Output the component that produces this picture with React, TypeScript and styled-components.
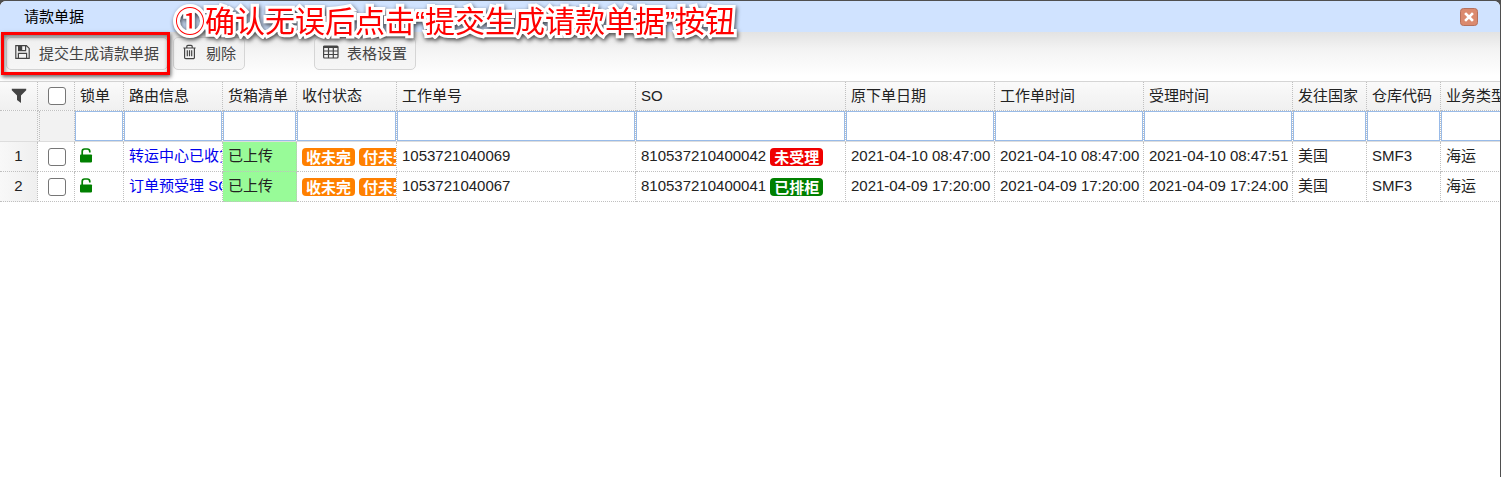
import React from "react";
import styled, { createGlobalStyle } from "styled-components";

const GlobalStyle = createGlobalStyle`
  * { box-sizing: border-box; }
  html, body, #root { height: 100%; }
  body {
    margin: 0;
    background: #4f4f4f;
    color: #222;
    font: 15px/20px "Liberation Sans", "Noto Sans CJK SC", sans-serif;
  }
`;

const Page = styled.div`
  height: 100%;
  padding-top: 1px;
`;

const Dialog = styled.main`
  position: relative;
  display: flex;
  flex-direction: column;
  min-height: 100%;
  margin: 0 1px 0 0;
  border-radius: 6px 6px 0 0;
  background: #fff;
  overflow: hidden;
`;

const TitleBar = styled.header`
  display: flex;
  align-items: center;
  justify-content: space-between;
  height: 31px;
  padding: 0 22px 0 24px;
  background: #d0e3ff;
`;

const Title = styled.h1`
  margin: 0;
  font-size: 15px;
  font-weight: 400;
  line-height: 20px;
  color: #000;
`;

const CloseButton = styled.button`
  display: flex;
  width: 18px;
  height: 18px;
  padding: 0;
  border: 0;
  background: none;
`;

const Toolbar = styled.div`
  display: flex;
  align-items: flex-start;
  height: 49px;
  padding: 5px 6px;
  background: linear-gradient(#e3e3e3, #f3f3f3 35%, #fff 90%);
`;

const ToolButton = styled.button<{ $gap?: number }>`
  display: flex;
  align-items: center;
  gap: 8px;
  height: 33px;
  margin: 0 0 0 ${(p) => p.$gap ?? 0}px;
  padding: 0 8px;
  border: 1px solid #d5d5d5;
  border-radius: 5px;
  background: linear-gradient(#f0f0f0, #f6f6f6);
  color: #444;
  font: inherit;
  white-space: nowrap;

  svg {
    margin-bottom: 3px;
  }
`;

const GridWrap = styled.section`
  overflow: hidden;
  border-top: 1px solid #d5d5d5;
`;

const Grid = styled.table`
  width: 1515px;
  table-layout: fixed;
  border-collapse: separate;
  border-spacing: 0;
`;

const HeadCell = styled.th`
  height: 29px;
  padding: 0 0 0 5px;
  border-right: 1px dotted #c0c0c0;
  border-bottom: 1px dotted #c0c0c0;
  background: linear-gradient(#fafafa, #f0f0f0);
  color: #222;
  font-weight: 400;
  text-align: left;
  white-space: nowrap;
`;

const HeadTool = styled(HeadCell)`
  padding: 0;
`;

const FilterCell = styled.td<{ $blank?: boolean }>`
  height: 31px;
  padding: 0;
  border-right: 1px dotted #c0c0c0;
  border-bottom: 1px solid #ddd;
  background: ${(p) => (p.$blank ? "#f2f2f2" : "#fff")};
`;

const FilterSpacer = styled.div`
  height: 30px;
  margin-left: 1px;
  border-left: 1px dotted #c0c0c0;
`;

const FilterInput = styled.input`
  display: block;
  width: 100%;
  height: 30px;
  margin: 0;
  padding: 0 4px;
  border: 1px solid #99bbe8;
  background: #fff;
  font: inherit;
  outline: 0;
`;

const Cell = styled.td<{ $done?: boolean }>`
  height: 30px;
  padding: 0 0 2px 5px;
  border-right: 1px dotted #c0c0c0;
  border-bottom: 1px dotted #c0c0c0;
  background: ${(p) => (p.$done ? "#98fb98" : "#fff")};
  overflow: hidden;
  white-space: nowrap;
`;

const NumberCell = styled(Cell)`
  padding: 0 0 2px;
  background: linear-gradient(90deg, #f8f8f8, #efefef);
  text-align: center;
`;

const CheckCell = styled(Cell)`
  padding: 0;
`;

const Center = styled.div`
  display: flex;
  align-items: center;
  justify-content: center;
`;

const CheckBox = styled(Center)`
  padding-left: 2px;
`;

const Check = styled.input`
  appearance: none;
  width: 18px;
  height: 18px;
  margin: 0;
  border: 1px solid #767676;
  border-radius: 3px;
  background: #fff;
`;

const RouteLink = styled.a`
  color: #0000ee;
  text-decoration: none;
`;

const Line = styled.div`
  display: flex;
  align-items: center;
  gap: 4px;
`;

const Badge = styled.span<{ $color: string }>`
  flex: none;
  height: 18px;
  margin-top: 2px;
  padding: 0 4px;
  border-radius: 4px;
  background: ${(p) => p.$color};
  color: #fff;
  font-weight: 700;
  line-height: 19px;
`;

const Highlight = styled.div`
  position: absolute;
  top: 31px;
  left: 1px;
  width: 169px;
  height: 43px;
  border: 3px solid #f00;
  box-shadow: 1px 2px 4px rgba(0, 0, 0, 0.6), inset 1px 2px 4px rgba(0, 0, 0, 0.5);
  pointer-events: none;
`;

const Callout = styled.p`
  position: absolute;
  top: 1px;
  left: 175px;
  margin: 0;
  color: #f00;
  font: 30px/40px "Liberation Sans", "Noto Sans CJK SC", sans-serif;
  white-space: nowrap;
  -webkit-text-stroke: 6px #fff;
  stroke-linejoin: round;
  paint-order: stroke fill;
  filter: drop-shadow(1px 2px 2px rgba(0, 0, 0, 0.7));
  pointer-events: none;
`;

const CloseIcon = () => (
  <svg width="18" height="18" viewBox="0 0 18 18">
    <rect x="0.5" y="0.5" width="17" height="17" rx="3" fill="#db8a6e" stroke="#b5705c" />
    <path d="M6 6l6 6M12 6l-6 6" stroke="#fff" strokeWidth="2.6" strokeLinecap="square" />
  </svg>
);

const SaveIcon = () => (
  <svg width="16" height="16" viewBox="0 0 16 16" fill="none" stroke="#444" strokeWidth="1.2">
    <path d="M0.800 1.600h10.600l2.800 2.800v10H0.800zM3.400 14.200V9.400h8.200v4.800M3.600 1.800v4.800h7V1.800" />
    <path d="M4 2h3.200v4.200H4z" fill="#444" stroke="none" />
  </svg>
);

const TrashIcon = () => (
  <svg width="16" height="16" viewBox="0 0 16 16" fill="none" stroke="#444" strokeWidth="1.200">
    <path d="M1.400 4h12.200M4.800 3.800V2.400a1 1 0 0 1 1-1h3.400a1 1 0 0 1 1 1v1.400M2.600 4v9.400a1.200 1.200 0 0 0 1.200 1.200h7.400a1.200 1.200 0 0 0 1.200-1.200V4M5.300 6.300v6M7.500 6.300v6M9.700 6.300v6" />
  </svg>
);

const TableIcon = () => (
  <svg width="16" height="16" viewBox="0 0 16 16" fill="none" stroke="#444">
    <rect x="0.600" y="2" width="14.400" height="12" rx="1" strokeWidth="1.200" />
    <path d="M0.600 3h14.400" strokeWidth="2.200" />
    <path d="M1 7h14M1 10.500h14M5.500 3v11M10.300 3v11" strokeWidth="1.200" />
  </svg>
);

const FunnelIcon = () => (
  <svg width="16" height="16" viewBox="0 0 16 16" fill="#444">
    <path d="M0.800 0.800h14.400v1.400L10 7.600V15L6 12V7.600L0.800 2.200z" />
  </svg>
);

const UnlockIcon = () => (
  <svg width="13" height="16" viewBox="0 0 13 16" fill="#008000">
    <rect x="0" y="6.400" width="12" height="8" rx="0.800" />
    <path d="M2.200 7V3.400a2.400 2.400 0 0 1 2.400-2.400h2.800a2.400 2.400 0 0 1 2.400 2.400V4.600" fill="none" stroke="#008000" strokeWidth="1.700" />
  </svg>
);

const columns = [
  { label: "锁单", width: 49 },
  { label: "路由信息", width: 99 },
  { label: "货箱清单", width: 74 },
  { label: "收付状态", width: 100 },
  { label: "工作单号", width: 239 },
  { label: "SO", width: 210 },
  { label: "原下单日期", width: 149 },
  { label: "工作单时间", width: 149 },
  { label: "受理时间", width: 149 },
  { label: "发往国家", width: 74 },
  { label: "仓库代码", width: 74 },
  { label: "业务类型", width: 74 },
];

const orders = [
  {
    route: "转运中心已收货",
    job: "1053721040069",
    so: "810537210400042",
    status: "未受理",
    color: "#f00000",
    dates: ["2021-04-10 08:47:00", "2021-04-10 08:47:00", "2021-04-10 08:47:51"],
  },
  {
    route: "订单预受理 SO",
    job: "1053721040067",
    so: "810537210400041",
    status: "已排柜",
    color: "#008000",
    dates: ["2021-04-09 17:20:00", "2021-04-09 17:20:00", "2021-04-09 17:24:00"],
  },
];

export default function App() {
  return (
    <Page>
      <GlobalStyle />
      <Dialog>
        <TitleBar>
          <Title>请款单据</Title>
          <CloseButton type="button" aria-label="关闭">
            <CloseIcon />
          </CloseButton>
        </TitleBar>
        <Toolbar>
          <ToolButton type="button"><SaveIcon />提交生成请款单据</ToolButton>
          <ToolButton type="button" $gap={5}><TrashIcon />剔除</ToolButton>
          <ToolButton type="button" $gap={69}><TableIcon />表格设置</ToolButton>
        </Toolbar>
        <GridWrap>
          <Grid>
            <colgroup>
              <col style={{ width: 38 }} />
              <col style={{ width: 37 }} />
              {columns.map((c) => <col key={c.label} style={{ width: c.width }} />)}
            </colgroup>
            <thead>
              <tr>
                <HeadTool aria-label="筛选"><Center><FunnelIcon /></Center></HeadTool>
                <HeadTool>
                  <CheckBox><Check type="checkbox" aria-label="全选" /></CheckBox>
                </HeadTool>
                {columns.map((c) => <HeadCell key={c.label} scope="col">{c.label}</HeadCell>)}
              </tr>
            </thead>
            <tbody>
              <tr>
                <FilterCell $blank />
                <FilterCell $blank><FilterSpacer /></FilterCell>
                {columns.map((c) => (
                  <FilterCell key={c.label}><FilterInput type="text" aria-label={c.label} /></FilterCell>
                ))}
              </tr>
              {orders.map((o, i) => (
                <tr key={o.job}>
                  <NumberCell>{i + 1}</NumberCell>
                  <CheckCell><CheckBox><Check type="checkbox" aria-label={o.job} /></CheckBox></CheckCell>
                  <Cell><Line><UnlockIcon /></Line></Cell>
                  <Cell><RouteLink href="#">{o.route}</RouteLink></Cell>
                  <Cell $done>已上传</Cell>
                  <Cell>
                    <Line>
                      <Badge $color="#ff8000">收未完</Badge>
                      <Badge $color="#ff8000">付未完</Badge>
                    </Line>
                  </Cell>
                  <Cell>{o.job}</Cell>
                  <Cell><Line>{o.so}<Badge $color={o.color}>{o.status}</Badge></Line></Cell>
                  {o.dates.map((d, k) => <Cell key={k}>{d}</Cell>)}
                  <Cell>美国</Cell>
                  <Cell>SMF3</Cell>
                  <Cell>海运</Cell>
                </tr>
              ))}
            </tbody>
          </Grid>
        </GridWrap>
        <Highlight />
        <Callout>①确认无误后点击“提交生成请款单据”按钮</Callout>
      </Dialog>
    </Page>
  );
}
